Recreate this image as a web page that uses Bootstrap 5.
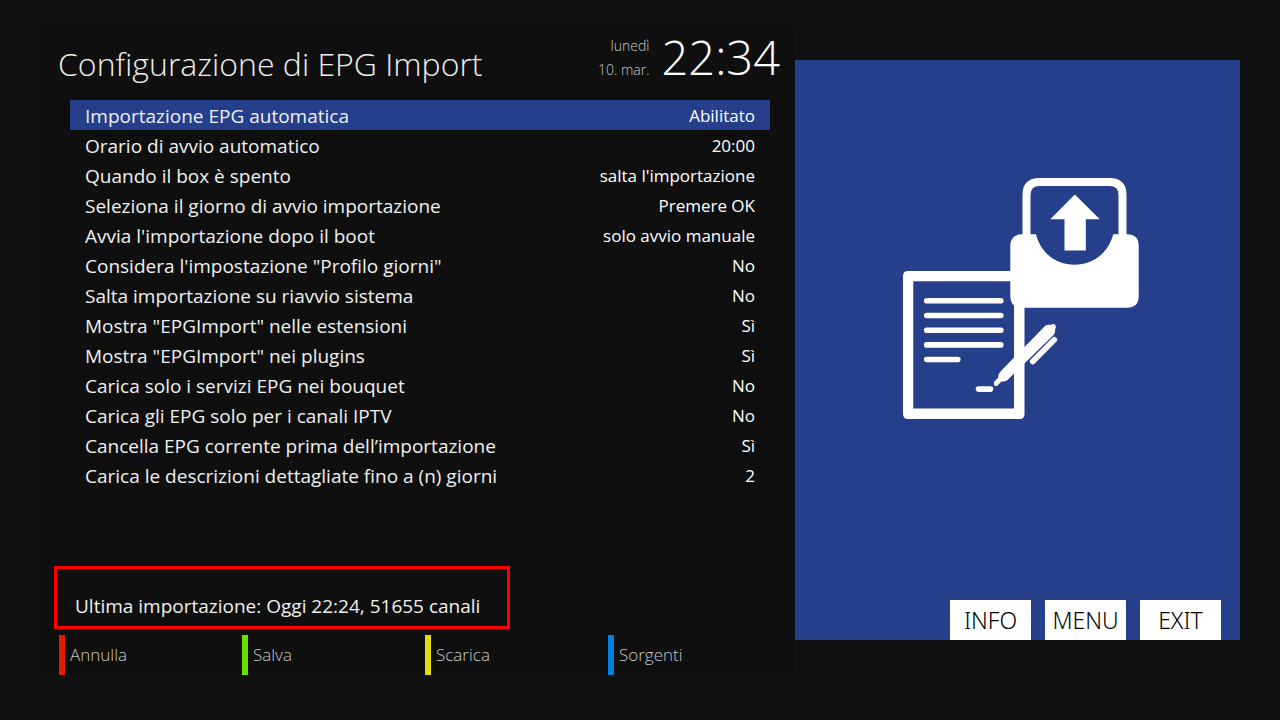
<!DOCTYPE html>
<html lang="it">
<head>
<meta charset="utf-8">
<meta name="viewport" content="width=device-width, initial-scale=1">
<title>Configurazione di EPG Import</title>
<link rel="stylesheet" href="https://cdn.jsdelivr.net/npm/bootstrap@5.3.0/dist/css/bootstrap.min.css">
<style>
  body { background: #111; color: #f0f0f0; font-family: "Open Sans", "Noto Sans", sans-serif; }
  .screen { padding: 25px 40px 45px; }
  .setup-panel { flex: 0 0 calc(100% * 151 / 240); background: #0f0f0f; }
  .side-panel { flex: 1 1 0; background: #263f8b; margin: 35px 0; padding: 118px 19px 0 26px; }
  .top-bar { height: 75px; padding: 0 15px 0 18px; }
  .page-title { font-size: 32px; line-height: 78px; font-weight: 300; }
  .date-lines { font-size: 14px; line-height: 24px; font-weight: 300; color: #c8c8c8; padding-top: 9px; }
  .clock-time { font-size: 47px; line-height: 64px; font-weight: 300; color: #fff; }
  .settings { margin: 0 25px 0 30px; }
  .settings table { width: 100%; }
  .settings th, .settings td { height: 30px; padding: 2px 15px 0; line-height: 28px; font-weight: 400; }
  .settings th { font-size: 19px; }
  .settings td { font-size: 17px; text-align: right; color: #fff; }
  .settings .selected { background: #263f8b; }
  .status-box { width: 456px; border: 3px solid #f00; padding: 22px 18px 5px; margin: 0 0 6px 14px; font-size: 19px; line-height: 30px; }
  .color-keys { padding: 0 4px 0 19px; }
  .color-key { flex: 1 1 0; height: 40px; border: 0; border-left: 6px solid; background: none; padding: 0 5px; text-align: left; font-size: 17px; font-weight: 300; }
  .color-key span { color: #c8c8c8; }
  .key-red { border-color: #e01b00; }
  .key-green { border-color: #66e000; }
  .key-yellow { border-color: #e0dc10; }
  .key-blue { border-color: #0080e0; }
  .side-art { width: 236px; }
  .remote-keys { gap: 14px; }
  .remote-key { width: 81px; height: 40px; border: 0; padding: 0; background: #fff; color: #000; font-family: "Noto Sans", "Open Sans", sans-serif; font-size: 23px; font-weight: 300; }
</style>
</head>
<body>
<main class="screen d-flex min-vh-100">
  <section class="setup-panel d-flex flex-column">
    <header class="top-bar d-flex justify-content-between">
      <h1 class="page-title m-0 text-nowrap">Configurazione di EPG Import</h1>
      <div class="d-flex">
        <div class="date-lines text-end text-nowrap me-2 pe-1"><div>lunedì</div><div>10. mar.</div></div>
        <time class="clock-time" datetime="22:34">22:34</time>
      </div>
    </header>
    <div class="settings">
      <table>
        <tbody>
          <tr class="selected"><th scope="row">Importazione EPG automatica</th><td>Abilitato</td></tr>
          <tr><th scope="row">Orario di avvio automatico</th><td>20:00</td></tr>
          <tr><th scope="row">Quando il box è spento</th><td>salta l'importazione</td></tr>
          <tr><th scope="row">Seleziona il giorno di avvio importazione</th><td>Premere OK</td></tr>
          <tr><th scope="row">Avvia l'importazione dopo il boot</th><td>solo avvio manuale</td></tr>
          <tr><th scope="row">Considera l'impostazione "Profilo giorni"</th><td>No</td></tr>
          <tr><th scope="row">Salta importazione su riavvio sistema</th><td>No</td></tr>
          <tr><th scope="row">Mostra "EPGImport" nelle estensioni</th><td>Sì</td></tr>
          <tr><th scope="row">Mostra "EPGImport" nei plugins</th><td>Sì</td></tr>
          <tr><th scope="row">Carica solo i servizi EPG nei bouquet</th><td>No</td></tr>
          <tr><th scope="row">Carica gli EPG solo per i canali IPTV</th><td>No</td></tr>
          <tr><th scope="row">Cancella EPG corrente prima dell’importazione</th><td>Sì</td></tr>
          <tr><th scope="row">Carica le descrizioni dettagliate fino a (n) giorni</th><td>2</td></tr>
        </tbody>
      </table>
    </div>
    <div class="status-box mt-auto text-nowrap">Ultima importazione: Oggi 22:24, 51655 canali</div>
    <div class="color-keys d-flex">
      <button type="button" class="color-key key-red"><span>Annulla</span></button>
      <button type="button" class="color-key key-green"><span>Salva</span></button>
      <button type="button" class="color-key key-yellow"><span>Scarica</span></button>
      <button type="button" class="color-key key-blue"><span>Sorgenti</span></button>
    </div>
  </section>
  <aside class="side-panel d-flex flex-column justify-content-between">
    <svg class="side-art align-self-center" viewBox="903 178 236 242" fill="#fff" aria-hidden="true">
      <!-- sheet -->
      <path fill-rule="evenodd" d="M908 271H1020Q1024.500 271 1024.500 276V414Q1024.500 419 1020 419H908Q903 419 903 414V276Q903 271 908 271ZM913.300 281.300V408.500H1014V281.300Z"/>
      <g fill="none" stroke="#fff" stroke-width="5.600" stroke-linecap="round">
        <path d="M926.700 300.800H1000.800M926.700 315.500H1000.800M926.700 330.200H1000.800M926.700 344.900H1000.800M926.700 359.500H957.800M978.500 389.100H990.500"/>
        <path d="M1032.700 361.500L1054.300 339.800"/>
      </g>
      <!-- pen -->
      <path d="M1045.500 325.500Q1048 324.500 1050.500 325Q1053.500 323 1055.300 325Q1056.500 327 1055 329.500Q1055.500 332.500 1053.500 335L1007.500 380Q1005 382 1001.500 381.500L998.500 384.500Q997 386.800 994.800 385.800Q993 384 994.500 381.500L998.300 377.500Q998 374 1000.500 371.500Z"/>
      <!-- tray with uploaded card -->
      <path fill="none" stroke="#fff" stroke-width="8" d="M1026.500 240V195Q1026.500 182 1039.500 182H1109.500Q1122.500 182 1122.500 195V240"/>
      <path d="M1022 234.300H1036C1041 254 1057 264.700 1074.500 264.700S1108 254 1113.300 234.300H1127Q1138.700 234.300 1138.700 246V296Q1138.700 307.700 1127 307.700H1022Q1010.300 307.700 1010.300 296V246Q1010.300 234.300 1022 234.300Z"/>
      <path d="M1074.800 194.500L1099.800 219.300H1085.800V250.500H1064.500V219.300H1050.300Z"/>
    </svg>
    <div class="remote-keys d-flex justify-content-end">
      <button type="button" class="remote-key">INFO</button>
      <button type="button" class="remote-key">MENU</button>
      <button type="button" class="remote-key">EXIT</button>
    </div>
  </aside>
</main>
<script src="https://cdn.jsdelivr.net/npm/bootstrap@5.3.0/dist/js/bootstrap.bundle.min.js"></script>
</body>
</html>
